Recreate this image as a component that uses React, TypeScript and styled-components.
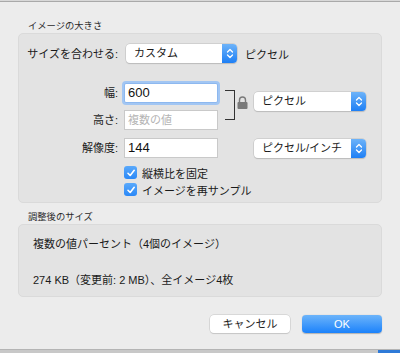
import styled, {createGlobalStyle} from "styled-components";

const fontStack = `"Liberation Sans", "Noto Sans CJK JP", sans-serif`;

const GlobalStyle = createGlobalStyle`
	html, body {
		margin: 0;
		padding: 0;
		background: #ececec;
	}
	body {
		font-family: ${fontStack};
		color: #1a1a1a;
		-webkit-font-smoothing: antialiased;
	}
`;

const Window = styled.div`
	width: 400px;
	height: 353px;
	display: flex;
	flex-direction: column;
	background: #ececec;
	overflow: hidden;
`;

const TopEdge = styled.div`
	height: 1px;
	background: #d8d8d8;
	border-bottom: 1px solid #a9a9a9;
	flex-shrink: 0;
`;

const Body = styled.div`
	flex: 1;
	display: flex;
	flex-direction: column;
	padding: 17px 18px 0 18px;
`;

const SectionTitle = styled.div<{ $gap?: number }>`
	font-size: 9.3px;
	line-height: 14px;
	color: #2a2a2a;
	padding-left: 10px;
	margin-top: ${p => p.$gap ?? 0}px;
	margin-bottom: 0;
	white-space: nowrap;
`;

const GroupBox = styled.div<{ $height: number }>`
	height: ${p => p.$height}px;
	box-sizing: border-box;
	background: #e3e3e3;
	border: 1px solid #dadada;
	border-radius: 5px;
`;

const SizeGroup = styled(GroupBox)`
	display: flex;
	flex-direction: column;
	padding-top: 10px;
`;

const Row = styled.div`
	display: flex;
	align-items: center;
`;

const Label = styled.div`
	width: 99px;
	text-align: right;
	font-size: 11px;
	line-height: 18px;
	white-space: nowrap;
	flex-shrink: 0;
`;

const TextField = styled.div<{ $focused?: boolean; $placeholder?: boolean }>`
	width: 94px;
	height: 20px;
	box-sizing: border-box;
	margin-left: 6px;
	background: #fff;
	border: 1px solid ${p => p.$focused ? "#8db8ef" : "#c9c9c9"};
	box-shadow: ${p => p.$focused ? "0 0 0 2px #a2c6f3" : "none"};
	border-radius: ${p => p.$focused ? "2px" : "0"};
	font-size: ${p => p.$placeholder ? "11px" : "13px"};
	line-height: 18px;
	padding-left: 3px;
	color: ${p => p.$placeholder ? "#b4b4b4" : "#111"};
	white-space: nowrap;
`;

const Popup = styled.div<{ $width: number }>`
	width: ${p => p.$width}px;
	height: 19px;
	box-sizing: border-box;
	display: flex;
	background: #fff;
	border-radius: 4px;
	box-shadow: 0 0 0 0.5px #bdbdbd, 0 1px 1px rgba(0, 0, 0, 0.18);
	overflow: hidden;
	flex-shrink: 0;
`;

const PopupText = styled.div`
	flex: 1;
	font-size: 11px;
	line-height: 19px;
	padding-left: 8px;
	white-space: nowrap;
`;

const Stepper = styled.div`
	width: 15px;
	background: linear-gradient(#6db3f9, #1e7ff5);
	display: flex;
	align-items: center;
	justify-content: center;
`;

const UnitText = styled.div`
	font-size: 11px;
	margin-left: 8px;
	white-space: nowrap;
`;

const FieldsBlock = styled.div`
	display: flex;
	align-items: flex-start;
	margin-top: 20px;
`;

const FieldColumn = styled.div`
	display: flex;
	flex-direction: column;
	gap: 7px;
`;

const Bracket = styled.div`
	width: 10px;
	height: 30px;
	margin-top: 7px;
	margin-left: 7px;
	border: 1.5px solid #333;
	border-left: none;
	box-sizing: border-box;
`;

const LockWrap = styled.div`
	margin-top: 12px;
	margin-left: 2px;
	width: 12px;
`;

const LinkedPopupWrap = styled.div`
	margin-top: 9px;
	margin-left: 5px;
`;

const ResolutionRow = styled(Row)`
	margin-top: 8px;
`;

const ResolutionPopupWrap = styled.div`
	margin-left: 36px;
`;

const CheckList = styled.div`
	display: flex;
	flex-direction: column;
	margin-top: 6px;
`;

const CheckRow = styled.label`
	display: flex;
	align-items: center;
	margin-left: 105px;
	height: 17px;
	font-size: 11px;
	gap: 5px;
	white-space: nowrap;
`;

const CheckBox = styled.div`
	width: 13px;
	height: 13px;
	border-radius: 3px;
	background: linear-gradient(#5aa9fb, #2a88f7);
	display: flex;
	align-items: center;
	justify-content: center;
`;

const ResultGroup = styled(GroupBox)`
	padding: 9px 0 0 14px;
	font-size: 11px;
`;

const ResultLine = styled.div<{ $gap?: number }>`
	line-height: 20px;
	margin-top: ${p => p.$gap ?? 0}px;
	white-space: nowrap;
`;

const ButtonBar = styled.div`
	display: flex;
	justify-content: flex-end;
	gap: 12px;
	margin-top: 18px;
`;

const Button = styled.button<{ $primary?: boolean }>`
	width: 80px;
	height: 18px;
	padding: 0;
	border: none;
	border-radius: 4px;
	font-family: ${fontStack};
	font-size: 11px;
	line-height: 18px;
	color: ${p => p.$primary ? "#fff" : "#222"};
	background: ${p => p.$primary ? "linear-gradient(#6cb4fa, #1b82fb)" : "#fff"};
	box-shadow: ${p => p.$primary ? "0 0.5px 1px rgba(0,0,0,0.25)" : "0 0 0 0.5px #c4c4c4, 0 1px 1px rgba(0,0,0,0.15)"};
`;

const BottomEdge = styled.div`
	height: 3px;
	display: flex;
	border-top: 1px solid #b4b4b4;
	background: #c8c8c8;
	flex-shrink: 0;
`;

const BottomAccent = styled.div`
	margin-left: auto;
	width: 22px;
	background: #2f7ad8;
`;

function Chevrons() {
	return (
		<svg width="8" height="13" viewBox="0 0 8 13">
			<path d="M1.5 5 L4 2.5 L6.5 5 M1.5 8 L4 10.5 L6.5 8" fill="none" stroke="#fff" strokeWidth="1.3" strokeLinecap="round" strokeLinejoin="round"/>
		</svg>
	);
}

function Lock() {
	return (
		<svg width="11" height="13" viewBox="0 0 11 13">
			<path d="M2.5 6 V4 a3 3 0 0 1 6 0 V6" fill="none" stroke="#7a7a7a" strokeWidth="1.4"/>
			<rect x="0.5" y="6" width="10" height="7" rx="1" fill="#7a7a7a"/>
		</svg>
	);
}

function Check() {
	return (
		<svg width="10" height="10" viewBox="0 0 10 10">
			<path d="M2 5.3 L4.2 7.5 L8.2 2.3" fill="none" stroke="#fff" strokeWidth="1.6" strokeLinecap="round" strokeLinejoin="round"/>
		</svg>
	);
}

function PopupButton({label, width}: { label: string; width: number }) {
	return (
		<Popup $width={width}>
			<PopupText>{label}</PopupText>
			<Stepper><Chevrons/></Stepper>
		</Popup>
	);
}

export default function App() {
	return (
		<Window>
			<GlobalStyle/>
			<TopEdge/>
			<Body>
				<SectionTitle>イメージの大きさ</SectionTitle>
				<SizeGroup $height={170}>
					<Row>
						<Label>サイズを合わせる:</Label>
						<div style={{marginLeft: 8}}>
							<PopupButton label="カスタム" width={111}/>
						</div>
						<UnitText>ピクセル</UnitText>
					</Row>

					<FieldsBlock>
						<FieldColumn>
							<Row>
								<Label>幅:</Label>
								<TextField $focused>600</TextField>
							</Row>
							<Row>
								<Label>高さ:</Label>
								<TextField $placeholder>複数の値</TextField>
							</Row>
						</FieldColumn>
						<Bracket/>
						<LockWrap><Lock/></LockWrap>
						<LinkedPopupWrap>
							<PopupButton label="ピクセル" width={112}/>
						</LinkedPopupWrap>
					</FieldsBlock>

					<ResolutionRow>
						<Label>解像度:</Label>
						<TextField>144</TextField>
						<ResolutionPopupWrap>
							<PopupButton label="ピクセル/インチ" width={112}/>
						</ResolutionPopupWrap>
					</ResolutionRow>

					<CheckList>
						<CheckRow><CheckBox><Check/></CheckBox>縦横比を固定</CheckRow>
						<CheckRow><CheckBox><Check/></CheckBox>イメージを再サンプル</CheckRow>
					</CheckList>
				</SizeGroup>

				<SectionTitle $gap={7}>調整後のサイズ</SectionTitle>
				<ResultGroup $height={73}>
					<ResultLine>複数の値パーセント（4個のイメージ）</ResultLine>
					<ResultLine $gap={16}>274 KB（変更前: 2 MB）、全イメージ4枚</ResultLine>
				</ResultGroup>

				<ButtonBar>
					<Button>キャンセル</Button>
					<Button $primary>OK</Button>
				</ButtonBar>
			</Body>
			<BottomEdge><BottomAccent/></BottomEdge>
		</Window>
	);
}
